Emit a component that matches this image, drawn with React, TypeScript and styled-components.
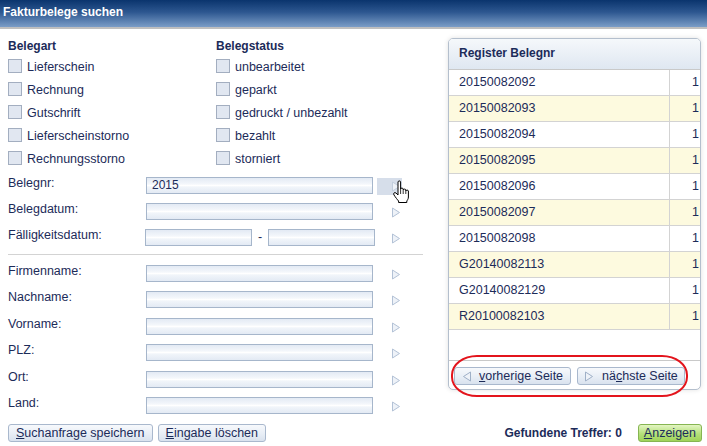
import React from 'react';
import styled, { createGlobalStyle } from 'styled-components';

const GlobalStyle = createGlobalStyle`
  html, body {
    margin: 0;
    padding: 0;
    background: #ffffff;
  }
  body {
    font-family: "Liberation Sans", Arial, sans-serif;
    font-size: 12.5px;
    color: #1c2b59;
  }
`;

const navy = '#1c2b59';

const Page = styled.div`
  position: relative;
  width: 707px;
  height: 446px;
  overflow: hidden;
  background: #ffffff;
`;

const TitleBar = styled.div`
  height: 27px;
  border-bottom: 2px solid #bfbfbf;
  background: linear-gradient(#0a346d 0%, #2d5790 45%, #7b9dc7 100%);
  color: #ffffff;
  font-weight: bold;
  font-size: 12px;
  line-height: 24px;
  padding-left: 3px;
`;

const Content = styled.div`
  display: flex;
  padding-top: 9px;
`;

const LeftCol = styled.div`
  width: 423px;
  padding-left: 8px;
  display: flex;
  flex-direction: column;
`;

const RightCol = styled.div`
  margin-left: 17px;
  width: 253px;
  display: flex;
  flex-direction: column;
`;

const CheckGrid = styled.div`
  display: grid;
  grid-template-columns: 208px 1fr;
`;

const CheckColumn = styled.div`
  display: flex;
  flex-direction: column;
`;

const GroupHeading = styled.div`
  font-weight: bold;
  font-size: 12px;
  line-height: 17px;
  height: 17px;
`;

const CheckRow = styled.label`
  display: flex;
  align-items: center;
  height: 23px;
  gap: 5px;
`;

const Box = styled.span`
  width: 12px;
  height: 12px;
  border: 1px solid #a3aec0;
  background: #e1e7f1;
  flex: none;
  margin-top: -1px;
`;

const FieldGroup = styled.div<{ $top: number; $gap: number }>`
  display: flex;
  flex-direction: column;
  margin-top: ${(p) => p.$top}px;
  gap: ${(p) => p.$gap}px;
`;

const FieldRow = styled.div`
  display: grid;
  grid-template-columns: 138px 227px 29px;
  align-items: start;
  height: 17px;
`;

const FieldLabel = styled.div`
  line-height: 15px;
  margin-top: -1px;
`;

const Input = styled.div<{ $width?: number }>`
  box-sizing: border-box;
  width: ${(p) => (p.$width ? `${p.$width}px` : '100%')};
  height: 17px;
  border: 1px solid #a6b6cb;
  background: linear-gradient(#e3eaf4 0%, #f4f7fb 40%, #ffffff 50%, #f1f5fa 60%, #e3eaf4 100%);
  padding-left: 5px;
  line-height: 15px;
  font-size: 12px;
  color: ${navy};
`;

const Range = styled.div`
  display: flex;
  align-items: center;
  margin-left: -1px;
  width: 230px;
`;

const Dash = styled.span`
  width: 16px;
  text-align: center;
  line-height: 15px;
`;

const ArrowCell = styled.div<{ $hover?: boolean }>`
  margin-left: 4px;
  height: 17px;
  margin-top: 1px;
  width: 25px;
  display: flex;
  align-items: center;
  justify-content: flex-end;
  padding-right: 1px;
  box-sizing: border-box;
  background: ${(p) => (p.$hover ? '#d6deea' : 'transparent')};
`;

const Separator = styled.div`
  margin-top: 8px;
  height: 1px;
  width: 415px;
  background: #d3d3d3;
`;

const Footer = styled.div`
  position: absolute;
  left: 0;
  right: 0;
  top: 424px;
  display: flex;
  justify-content: space-between;
  align-items: center;
  padding: 0 5px 0 8px;
`;

const ButtonGroup = styled.div`
  display: flex;
  gap: 5px;
  align-items: center;
`;

const Button = styled.button<{ $green?: boolean; $gap?: number; $pad?: number }>`
  font-family: "Liberation Sans", Arial, sans-serif;
  font-size: 12.5px;
  color: ${navy};
  height: 18px;
  padding: 0 ${(p) => p.$pad ?? 7}px;
  border-radius: 3px;
  border: 1px solid ${(p) => (p.$green ? '#86b552' : '#a9b8cd')};
  background: ${(p) =>
    p.$green
      ? 'linear-gradient(#e3f5c2, #b4e07a 55%, #9fd35a)'
      : 'linear-gradient(#f7f9fc, #e8eef6 55%, #d9e2ee)'};
  display: flex;
  align-items: center;
  gap: ${(p) => p.$gap ?? 6}px;
  cursor: pointer;
  line-height: 16px;
`;

const U = styled.span`
  text-decoration: underline;
`;

const Hits = styled.div`
  display: flex;
  align-items: center;
  gap: 16px;
  font-weight: bold;
  font-size: 12px;
`;

const Panel = styled.div`
  border: 1px solid #b4bfcd;
  border-radius: 5px;
  box-shadow: 0 0 5px rgba(0, 0, 0, 0.12);
  overflow: hidden;
  background: #ffffff;
`;

const PanelHeader = styled.div`
  height: 30px;
  line-height: 29px;
  padding-left: 10px;
  font-weight: bold;
  font-size: 12px;
  border-bottom: 1px solid #c9c9c9;
  background: linear-gradient(#f5f8fb, #dfe7f1);
`;

const Row = styled.div<{ $odd: boolean }>`
  display: grid;
  grid-template-columns: 220px 1fr;
  height: 25px;
  border-bottom: 1px solid #d3d3d3;
  background: ${(p) => (p.$odd ? '#fdfadf' : '#ffffff')};
  line-height: 25px;
`;

const Cell = styled.div<{ $right?: boolean }>`
  padding: ${(p) => (p.$right ? '0 1px 0 0' : '0 0 0 10px')};
  text-align: ${(p) => (p.$right ? 'right' : 'left')};
  border-left: ${(p) => (p.$right ? '1px solid #d3d3d3' : 'none')};
`;

const EmptyArea = styled.div`
  height: 30px;
  border-bottom: 1px solid #c9c9c9;
`;

const Pager = styled.div`
  display: flex;
  gap: 6px;
  padding: 6px 0 4px 5px;
`;

const Annotation = styled.div`
  position: absolute;
  left: 451px;
  top: 355px;
  width: 233px;
  height: 38px;
  border: 2.5px solid #e3141c;
  border-radius: 26px / 20px;
  pointer-events: none;
`;

const Cursor = styled.svg`
  position: absolute;
  left: 392px;
  top: 180px;
`;

function Triangle({ dir = 'right', color = '#b3c2d6' }: { dir?: 'left' | 'right'; color?: string }) {
  const d = dir === 'right' ? 'M1.5 1 L8.5 5.5 L1.5 10 Z' : 'M8.5 1 L1.5 5.5 L8.5 10 Z';
  return (
    <svg width="10" height="11" viewBox="0 0 10 11">
      <path d={d} fill="#eef2f8" stroke={color} strokeWidth="1" strokeLinejoin="round" />
    </svg>
  );
}

const belegart = ['Lieferschein', 'Rechnung', 'Gutschrift', 'Lieferscheinstorno', 'Rechnungsstorno'];
const belegstatus = ['unbearbeitet', 'geparkt', 'gedruckt / unbezahlt', 'bezahlt', 'storniert'];
const personFields = ['Firmenname:', 'Nachname:', 'Vorname:', 'PLZ:', 'Ort:', 'Land:'];
const belegnummern = [
  '20150082092',
  '20150082093',
  '20150082094',
  '20150082095',
  '20150082096',
  '20150082097',
  '20150082098',
  'G20140082113',
  'G20140082129',
  'R20100082103',
];

export default function App(): React.ReactElement {
  return (
    <Page>
      <GlobalStyle />
      <TitleBar>Fakturbelege suchen</TitleBar>
      <Content>
        <LeftCol>
          <CheckGrid>
            <CheckColumn>
              <GroupHeading>Belegart</GroupHeading>
              {belegart.map((l) => (
                <CheckRow key={l}>
                  <Box />
                  {l}
                </CheckRow>
              ))}
            </CheckColumn>
            <CheckColumn>
              <GroupHeading>Belegstatus</GroupHeading>
              {belegstatus.map((l) => (
                <CheckRow key={l}>
                  <Box />
                  {l}
                </CheckRow>
              ))}
            </CheckColumn>
          </CheckGrid>

          <FieldGroup $top={7} $gap={9}>
            <FieldRow>
              <FieldLabel>Belegnr:</FieldLabel>
              <Input>2015</Input>
              <ArrowCell $hover>
                <Triangle color="#c2cedd" />
              </ArrowCell>
            </FieldRow>
            <FieldRow>
              <FieldLabel>Belegdatum:</FieldLabel>
              <Input />
              <ArrowCell>
                <Triangle />
              </ArrowCell>
            </FieldRow>
            <FieldRow>
              <FieldLabel>Fälligkeitsdatum:</FieldLabel>
              <Range>
                <Input $width={107} />
                <Dash>-</Dash>
                <Input $width={107} />
              </Range>
              <ArrowCell>
                <Triangle />
              </ArrowCell>
            </FieldRow>
          </FieldGroup>

          <Separator />

          <FieldGroup $top={10} $gap={9.4}>
            {personFields.map((f) => (
              <FieldRow key={f}>
                <FieldLabel>{f}</FieldLabel>
                <Input />
                <ArrowCell>
                  <Triangle />
                </ArrowCell>
              </FieldRow>
            ))}
          </FieldGroup>
        </LeftCol>

        <RightCol>
          <Panel>
            <PanelHeader>Register Belegnr</PanelHeader>
            {belegnummern.map((n, i) => (
              <Row key={n} $odd={i % 2 === 1}>
                <Cell>{n}</Cell>
                <Cell $right>1</Cell>
              </Row>
            ))}
            <EmptyArea />
            <Pager>
              <Button $gap={7} $pad={7}>
                <Triangle dir="left" color="#9fb0c7" />
                <span>
                  <U>v</U>orherige Seite
                </span>
              </Button>
              <Button $gap={8} $pad={6}>
                <Triangle color="#9fb0c7" />
                <span>
                  nä<U>c</U>hste Seite
                </span>
              </Button>
            </Pager>
          </Panel>
        </RightCol>
      </Content>

      <Footer>
        <ButtonGroup>
          <Button>
            <span>
              <U>S</U>uchanfrage speichern
            </span>
          </Button>
          <Button>
            <span>
              <U>E</U>ingabe löschen
            </span>
          </Button>
        </ButtonGroup>
        <Hits>
          <span>Gefundene Treffer: 0</span>
          <Button $green $pad={5}>
            <span>
              <U>A</U>nzeigen
            </span>
          </Button>
        </Hits>
      </Footer>

      <Annotation />

      <Cursor width="20" height="24" viewBox="0 0 20 24">
        <path
          d="M6 2 C6 0.6 8.6 0.6 8.6 2 L8.6 9 C8.6 7.8 11.2 7.8 11.2 9 L11.2 10 C11.2 8.8 13.8 8.8 13.8 10 L13.8 11 C13.8 9.8 16.4 9.8 16.4 11 L16.4 17 C16.4 19 15.4 20 14.8 21 L14.8 22.5 L6.6 22.5 L6.6 21 C5.4 19.8 3.6 17.4 2 15 C1 13.4 2.4 11.8 4 13 L6 15 Z"
          fill="#ffffff"
          stroke="#000000"
          strokeWidth="1"
          strokeLinejoin="round"
        />
        <path d="M8.6 9 L8.6 14 M11.2 10 L11.2 14 M13.8 11 L13.8 14" stroke="#000000" strokeWidth="0.8" />
      </Cursor>
    </Page>
  );
}
